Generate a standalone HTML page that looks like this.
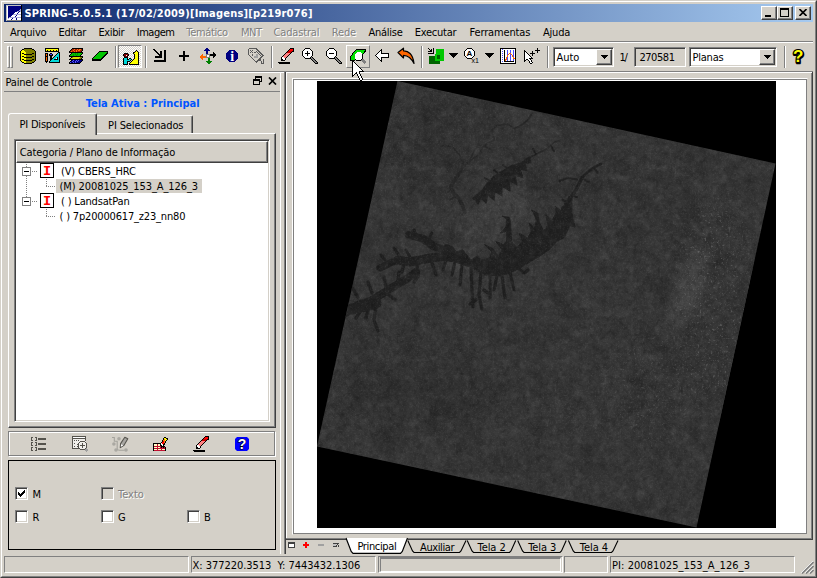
<!DOCTYPE html>
<html><head><meta charset="utf-8"><title>SPRING</title>
<style>
*{box-sizing:border-box;margin:0;padding:0}
html,body{width:817px;height:578px;overflow:hidden;background:#d4d0c8}
body{position:relative;font-family:"DejaVu Sans Condensed","Liberation Sans",sans-serif;font-size:11px;color:#000;line-height:13px}
.a{position:absolute}
.t{position:absolute;white-space:pre;line-height:13px}
.dis{color:#808080;text-shadow:1px 1px 0 #fff}
.hl{position:absolute;height:1px}
.vl{position:absolute;width:1px}
.g8{background:#808080}.g4{background:#404040}.w{background:#fff}.k{background:#000}
.sunk{position:absolute;border:1px solid;border-color:#808080 #fff #fff #808080}
.sunk2{position:absolute;border:1px solid;border-color:#808080 #fff #fff #808080;box-shadow:inset 1px 1px 0 #404040,inset -1px -1px 0 #d4d0c8}
.rais{position:absolute;border:1px solid;border-color:#fff #808080 #808080 #fff}
.btn{position:absolute;background:#d4d0c8;border:1px solid;border-color:#fff #404040 #404040 #fff;box-shadow:inset -1px -1px 0 #808080}
</style></head><body>
<!-- window frame -->
<div class="a" style="left:0;top:0;width:817px;height:578px;border:1px solid;border-color:#d4d0c8 #404040 #404040 #d4d0c8"></div>
<div class="a" style="left:1px;top:1px;width:815px;height:576px;border:1px solid;border-color:#fff #808080 #808080 #fff"></div>
<!-- title bar -->
<div class="a" id="title" style="left:4px;top:4px;width:809px;height:18px;background:linear-gradient(to right,#0a246a,#a6caf0)"></div>
<svg class="a" style="left:6px;top:5px" width="16" height="16" viewBox="0 0 16 16" shape-rendering="crispEdges"><path fill="#c0c0c0" d="M0 0h15v1h-15zM0 1h1v1h-1zM0 2h1v1h-1zM0 3h1v1h-1zM0 4h1v1h-1zM0 5h1v1h-1zM0 6h1v1h-1zM0 7h1v1h-1zM0 8h1v1h-1zM0 9h1v1h-1zM0 10h1v1h-1zM0 11h1v1h-1zM0 12h1v1h-1zM0 13h1v1h-1zM0 14h1v1h-1zM0 15h1v1h-1z"/><path fill="#000" d="M15 0h1v1h-1zM15 1h1v1h-1zM15 2h1v1h-1zM15 3h1v1h-1zM15 4h1v1h-1zM15 5h1v1h-1zM15 6h1v1h-1zM15 7h1v1h-1zM15 8h1v1h-1zM15 9h1v1h-1zM15 10h1v1h-1zM15 11h1v1h-1zM15 12h1v1h-1zM15 13h1v1h-1zM15 14h1v1h-1zM15 15h1v1h-1z"/><path fill="#fff" d="M1 1h1v1h-1zM1 2h1v1h-1zM1 3h1v1h-1zM1 4h1v1h-1zM1 5h1v1h-1zM1 6h1v1h-1zM1 7h1v1h-1zM9 7h3v1h-3zM13 7h2v1h-2zM1 8h1v1h-1zM8 8h3v1h-3zM12 8h3v1h-3zM1 9h1v1h-1zM1 10h1v1h-1zM6 10h4v1h-4zM11 10h4v1h-4zM1 11h1v1h-1zM5 11h4v1h-4zM10 11h5v1h-5zM1 12h1v1h-1zM1 13h1v1h-1zM3 13h3v1h-3zM7 13h3v1h-3zM11 13h4v1h-4zM1 14h4v1h-4zM6 14h4v1h-4zM11 14h4v1h-4z"/><path fill="#000080" d="M2 1h13v1h-13zM2 2h13v1h-13zM2 3h13v1h-13zM2 4h12v1h-12zM2 5h11v1h-11zM2 6h9v1h-9zM13 6h1v1h-1zM2 7h7v1h-7zM12 7h1v1h-1zM2 8h6v1h-6zM11 8h1v1h-1zM2 9h5v1h-5zM2 10h4v1h-4zM10 10h1v1h-1zM2 11h3v1h-3zM9 11h1v1h-1zM2 12h1v1h-1zM6 13h1v1h-1zM10 13h1v1h-1zM5 14h1v1h-1zM10 14h1v1h-1z"/><path fill="#a8a8dc" d="M14 4h1v1h-1zM13 5h2v1h-2zM11 6h2v1h-2zM14 6h1v1h-1zM7 9h8v1h-8zM3 12h12v1h-12zM2 13h1v1h-1z"/><path fill="#808080" d="M1 15h14v1h-14z"/></svg>
<div class="t" id="ttext" style="letter-spacing:0.207px;left:24.5px;top:7px;color:#fff;font-weight:bold">SPRING-5.0.5.1 (17/02/2009)[Imagens][p219r076]</div>
<div class="btn" style="left:761px;top:6px;width:16px;height:14px"><div class="a k" style="left:3px;top:8px;width:6px;height:2px"></div></div>
<div class="btn" style="left:777px;top:6px;width:16px;height:14px"><div class="a" style="left:2px;top:1px;width:9px;height:9px;border:1px solid #000;border-top-width:2px"></div></div>
<div class="btn" style="left:795px;top:6px;width:16px;height:14px"><svg class="a" style="left:3px;top:2px" width="8" height="7" viewBox="0 0 8 7"><path d="M0 0L7 7M7 0L0 7" stroke="#000" stroke-width="1.6" transform="translate(.5 0) scale(1 1)"/></svg></div>
<!-- menu bar -->
<div id="menu">
<div class="t" style="letter-spacing:-0.208px;left:10px;top:26px">Arquivo</div>
<div class="t" style="letter-spacing:-0.299px;left:58.5px;top:26px">Editar</div>
<div class="t" style="letter-spacing:-0.361px;left:98.4px;top:26px">Exibir</div>
<div class="t" style="letter-spacing:-0.507px;left:136.8px;top:26px">Imagem</div>
<div class="t dis" style="letter-spacing:-0.337px;left:186.3px;top:26px">Temático</div>
<div class="t dis" style="letter-spacing:-0.461px;left:241px;top:26px">MNT</div>
<div class="t dis" style="letter-spacing:-0.172px;left:273.6px;top:26px">Cadastral</div>
<div class="t dis" style="letter-spacing:-0.165px;left:331.8px;top:26px">Rede</div>
<div class="t" style="letter-spacing:-0.280px;left:368.6px;top:26px">Análise</div>
<div class="t" style="letter-spacing:-0.237px;left:414.7px;top:26px">Executar</div>
<div class="t" style="letter-spacing:-0.154px;left:469.6px;top:26px">Ferramentas</div>
<div class="t" style="letter-spacing:-0.248px;left:543.1px;top:26px">Ajuda</div>
</div>
<div class="hl g8" style="left:4px;top:41px;width:809px"></div>
<div class="hl w" style="left:4px;top:42px;width:809px"></div>
<!-- toolbar placeholder -->
<div id="toolbar">
<!-- handle -->
<div class="a" style="left:7px;top:46px;width:3px;height:22px;border:1px solid;border-color:#fff #808080 #808080 #fff"></div>
<div class="a" style="left:10px;top:46px;width:3px;height:22px;border:1px solid;border-color:#fff #808080 #808080 #fff"></div>
<!-- db -->
<svg class="a" style="left:20px;top:48px" width="16" height="16" viewBox="0 0 16 16" shape-rendering="crispEdges"><path fill="#000" d="M4 0h8v1h-8zM2 1h2v1h-2zM12 1h2v1h-2zM1 2h1v1h-1zM14 2h1v1h-1zM0 3h1v1h-1zM15 3h1v1h-1zM0 4h1v1h-1zM15 4h1v1h-1zM0 5h1v1h-1zM2 5h2v1h-2zM12 5h2v1h-2zM15 5h1v1h-1zM0 6h1v1h-1zM4 6h8v1h-8zM15 6h1v1h-1zM0 7h1v1h-1zM15 7h1v1h-1zM0 8h1v1h-1zM2 8h2v1h-2zM12 8h2v1h-2zM15 8h1v1h-1zM0 9h1v1h-1zM4 9h8v1h-8zM15 9h1v1h-1zM0 10h1v1h-1zM15 10h1v1h-1zM0 11h1v1h-1zM2 11h2v1h-2zM12 11h2v1h-2zM15 11h1v1h-1zM0 12h1v1h-1zM4 12h8v1h-8zM15 12h1v1h-1zM1 13h1v1h-1zM14 13h1v1h-1zM2 14h2v1h-2zM12 14h2v1h-2zM4 15h8v1h-8z"/><path fill="#808000" d="M4 1h8v1h-8zM4 2h10v1h-10zM5 3h10v1h-10zM6 4h9v1h-9zM6 5h6v1h-6zM14 5h1v1h-1zM12 6h3v1h-3zM6 7h9v1h-9zM6 8h6v1h-6zM14 8h1v1h-1zM12 9h3v1h-3zM6 10h9v1h-9zM6 11h6v1h-6zM14 11h1v1h-1zM12 12h3v1h-3zM6 13h8v1h-8zM6 14h6v1h-6z"/><path fill="#ffff00" d="M2 2h2v1h-2zM1 3h4v1h-4zM1 4h5v1h-5zM1 5h1v1h-1zM4 5h2v1h-2zM1 6h3v1h-3zM1 7h5v1h-5zM1 8h1v1h-1zM4 8h2v1h-2zM1 9h3v1h-3zM1 10h5v1h-5zM1 11h1v1h-1zM4 11h2v1h-2zM1 12h3v1h-3zM2 13h4v1h-4zM4 14h2v1h-2z"/></svg>
<!-- ruler/pencil/triangle -->
<svg class="a" style="left:44px;top:48px" width="16" height="15" viewBox="0 0 16 15" shape-rendering="crispEdges"><path fill="#000" d="M1 0h14v1h-14zM1 1h1v1h-1zM14 1h1v1h-1zM1 2h1v1h-1zM3 2h1v1h-1zM6 2h1v1h-1zM9 2h1v1h-1zM12 2h1v1h-1zM14 2h1v1h-1zM1 3h14v1h-14zM14 4h2v1h-2zM1 5h3v1h-3zM6 5h2v1h-2zM13 5h1v1h-1zM15 5h1v1h-1zM1 6h1v1h-1zM3 6h1v1h-1zM5 6h1v1h-1zM8 6h1v1h-1zM12 6h1v1h-1zM15 6h1v1h-1zM1 7h1v1h-1zM3 7h1v1h-1zM5 7h4v1h-4zM11 7h1v1h-1zM15 7h1v1h-1zM1 8h3v1h-3zM6 8h2v1h-2zM10 8h1v1h-1zM15 8h1v1h-1zM1 9h1v1h-1zM3 9h1v1h-1zM6 9h2v1h-2zM9 9h1v1h-1zM13 9h1v1h-1zM15 9h1v1h-1zM1 10h1v1h-1zM3 10h1v1h-1zM6 10h3v1h-3zM13 10h1v1h-1zM15 10h1v1h-1zM1 11h1v1h-1zM3 11h1v1h-1zM6 11h2v1h-2zM10 11h4v1h-4zM15 11h1v1h-1zM1 12h1v1h-1zM3 12h1v1h-1zM6 12h1v1h-1zM15 12h1v1h-1zM1 13h3v1h-3zM5 13h1v1h-1zM15 13h1v1h-1zM2 14h1v1h-1zM5 14h11v1h-11z"/><path fill="#ffff00" d="M2 1h12v1h-12zM2 2h1v1h-1zM4 2h2v1h-2zM7 2h2v1h-2zM10 2h2v1h-2zM13 2h1v1h-1z"/><path fill="#00d8d8" d="M14 5h1v1h-1zM13 6h2v1h-2zM12 7h3v1h-3zM11 8h4v1h-4zM10 9h3v1h-3zM14 9h1v1h-1zM9 10h3v1h-3zM14 10h1v1h-1zM8 11h2v1h-2zM14 11h1v1h-1zM7 12h8v1h-8zM6 13h9v1h-9z"/><path fill="#ff6600" d="M2 6h1v1h-1zM2 7h1v1h-1zM2 9h1v1h-1zM2 10h1v1h-1zM2 11h1v1h-1zM2 12h1v1h-1z"/><path fill="#4848ff" d="M6 6h2v1h-2z"/><path fill="#fff" d="M12 10h1v1h-1z"/></svg>
<!-- layers -->
<svg class="a" style="left:68px;top:48px" width="16" height="16" viewBox="0 0 16 16" shape-rendering="crispEdges"><path fill="#000" d="M4 0h11v1h-11zM3 1h1v1h-1zM14 1h1v1h-1zM2 2h1v1h-1zM14 2h1v1h-1zM1 3h1v1h-1zM13 3h1v1h-1zM1 4h14v1h-14zM3 5h1v1h-1zM14 5h1v1h-1zM2 6h1v1h-1zM13 6h1v1h-1zM1 7h1v1h-1zM12 7h1v1h-1zM1 8h14v1h-14zM3 9h1v1h-1zM14 9h1v1h-1zM2 10h1v1h-1zM13 10h1v1h-1zM1 11h14v1h-14zM3 12h1v1h-1zM14 12h1v1h-1zM2 13h1v1h-1zM13 13h1v1h-1zM1 14h1v1h-1zM12 14h1v1h-1zM1 15h11v1h-11z"/><path fill="#a02000" d="M4 1h2v1h-2zM7 1h2v1h-2zM10 1h1v1h-1zM13 1h1v1h-1zM3 2h2v1h-2zM6 2h2v1h-2zM9 2h1v1h-1zM12 2h2v1h-2zM2 3h1v1h-1zM4 3h2v1h-2zM7 3h1v1h-1zM9 3h4v1h-4z"/><path fill="#ff7010" d="M6 1h1v1h-1zM9 1h1v1h-1zM11 1h2v1h-2zM5 2h1v1h-1zM8 2h1v1h-1zM10 2h2v1h-2zM3 3h1v1h-1zM6 3h1v1h-1zM8 3h1v1h-1z"/><path fill="#00c400" d="M4 5h3v1h-3zM8 5h1v1h-1zM10 5h4v1h-4zM3 6h2v1h-2zM6 6h1v1h-1zM8 6h1v1h-1zM10 6h3v1h-3zM2 7h3v1h-3zM6 7h2v1h-2zM9 7h3v1h-3z"/><path fill="#009000" d="M7 5h1v1h-1zM9 5h1v1h-1zM5 6h1v1h-1zM7 6h1v1h-1zM9 6h1v1h-1zM5 7h1v1h-1zM8 7h1v1h-1z"/><path fill="#808000" d="M4 9h1v1h-1zM12 9h2v1h-2zM11 10h2v1h-2z"/><path fill="#d8d800" d="M5 9h7v1h-7zM3 10h8v1h-8z"/><path fill="#000080" d="M4 12h1v1h-1zM6 12h2v1h-2zM9 12h1v1h-1zM11 12h3v1h-3zM3 13h1v1h-1zM5 13h2v1h-2zM8 13h1v1h-1zM10 13h3v1h-3zM3 14h2v1h-2zM6 14h1v1h-1zM8 14h4v1h-4z"/><path fill="#5858ff" d="M5 12h1v1h-1zM8 12h1v1h-1zM10 12h1v1h-1zM4 13h1v1h-1zM7 13h1v1h-1zM9 13h1v1h-1zM2 14h1v1h-1zM5 14h1v1h-1zM7 14h1v1h-1z"/></svg>
<!-- green plane -->
<svg class="a" style="left:92px;top:48px" width="16" height="13" viewBox="0 0 16 13" shape-rendering="crispEdges"><path fill="#000" d="M7 3h9v1h-9zM6 4h1v1h-1zM15 4h1v1h-1zM5 5h1v1h-1zM14 5h2v1h-2zM4 6h1v1h-1zM13 6h2v1h-2zM3 7h1v1h-1zM12 7h2v1h-2zM2 8h1v1h-1zM11 8h2v1h-2zM1 9h1v1h-1zM10 9h2v1h-2zM0 10h1v1h-1zM9 10h2v1h-2zM0 11h10v1h-10zM0 12h9v1h-9z"/><path fill="#00c400" d="M7 4h8v1h-8zM6 5h8v1h-8zM5 6h8v1h-8zM4 7h8v1h-8zM3 8h8v1h-8zM2 9h8v1h-8zM1 10h8v1h-8z"/></svg>
<!-- sep1 -->
<div class="vl g8" style="left:115px;top:46px;height:22px"></div><div class="vl w" style="left:116px;top:46px;height:22px"></div>
<!-- pressed button -->
<div class="a" style="left:118px;top:45px;width:24px;height:23px;border:1px solid;border-color:#808080 #fff #fff #808080;background-color:#d4d0c8;background-image:linear-gradient(45deg,#fff 25%,transparent 25%,transparent 75%,#fff 75%),linear-gradient(45deg,#fff 25%,transparent 25%,transparent 75%,#fff 75%);background-size:2px 2px;background-position:0 0,1px 1px"></div>
<svg class="a" style="left:123px;top:49px" width="16" height="16" viewBox="0 0 16 16" shape-rendering="crispEdges"><path fill="#000" d="M13 1h1v1h-1zM12 2h1v1h-1zM14 2h1v1h-1zM10 3h2v1h-2zM15 3h1v1h-1zM1 4h4v1h-4zM10 4h1v1h-1zM15 4h1v1h-1zM0 5h1v1h-1zM5 5h1v1h-1zM11 5h1v1h-1zM15 5h1v1h-1zM0 6h1v1h-1zM5 6h1v1h-1zM11 6h1v1h-1zM15 6h1v1h-1zM1 7h1v1h-1zM4 7h1v1h-1zM11 7h1v1h-1zM15 7h1v1h-1zM1 8h4v1h-4zM11 8h1v1h-1zM15 8h1v1h-1zM0 9h1v1h-1zM4 9h1v1h-1zM6 9h2v1h-2zM11 9h1v1h-1zM15 9h1v1h-1zM0 10h1v1h-1zM4 10h2v1h-2zM8 10h1v1h-1zM10 10h1v1h-1zM15 10h1v1h-1zM0 11h1v1h-1zM7 11h1v1h-1zM9 11h1v1h-1zM15 11h1v1h-1zM0 12h1v1h-1zM4 12h3v1h-3zM8 12h1v1h-1zM15 12h1v1h-1zM0 13h1v1h-1zM4 13h1v1h-1zM7 13h1v1h-1zM15 13h1v1h-1zM0 14h1v1h-1zM4 14h1v1h-1zM6 14h1v1h-1zM15 14h1v1h-1zM0 15h5v1h-5zM6 15h10v1h-10z"/><path fill="#ffff00" d="M13 2h1v1h-1zM12 3h3v1h-3zM11 4h4v1h-4zM12 5h3v1h-3zM12 6h3v1h-3zM12 7h3v1h-3zM12 8h3v1h-3zM12 9h3v1h-3zM11 10h4v1h-4zM10 11h5v1h-5zM9 12h6v1h-6zM8 13h7v1h-7zM7 14h8v1h-8z"/><path fill="#800000" d="M1 5h4v1h-4zM1 6h2v1h-2zM4 6h1v1h-1zM2 7h2v1h-2z"/><path fill="#fff" d="M3 6h1v1h-1z"/><path fill="#00d8d8" d="M1 9h3v1h-3zM1 10h3v1h-3zM6 10h2v1h-2zM1 11h6v1h-6zM1 12h3v1h-3zM1 13h3v1h-3zM1 14h3v1h-3z"/></svg>
<!-- sep2 -->
<div class="vl g8" style="left:145px;top:46px;height:22px"></div><div class="vl w" style="left:146px;top:46px;height:22px"></div>
<!-- arrow corner -->
<svg class="a" style="left:152px;top:48px" width="16" height="14" viewBox="0 0 16 14" shape-rendering="crispEdges"><path fill="#000" d="M1 1h2v1h-2zM2 2h2v1h-2zM12 2h2v1h-2zM3 3h2v1h-2zM8 3h2v1h-2zM12 3h2v1h-2zM4 4h2v1h-2zM8 4h2v1h-2zM12 4h2v1h-2zM5 5h2v1h-2zM8 5h2v1h-2zM12 5h2v1h-2zM6 6h4v1h-4zM12 6h2v1h-2zM7 7h3v1h-3zM12 7h2v1h-2zM3 8h7v1h-7zM12 8h2v1h-2zM3 9h7v1h-7zM12 9h2v1h-2zM12 10h2v1h-2zM12 11h2v1h-2zM2 12h12v1h-12zM2 13h12v1h-12z"/></svg>
<!-- plus -->
<div class="a k" style="left:179px;top:55px;width:10px;height:2px"></div><div class="a k" style="left:183px;top:51px;width:2px;height:10px"></div>
<!-- move -->
<svg class="a" style="left:200px;top:48px" width="16" height="16" viewBox="0 0 16 16" shape-rendering="crispEdges"><path fill="#000080" d="M6 0h2v1h-2zM5 1h4v1h-4zM4 2h6v1h-6zM6 3h2v1h-2zM6 4h2v1h-2zM6 5h2v1h-2z"/><path fill="#000" d="M13 4h1v1h-1zM13 5h2v1h-2zM10 6h6v1h-6zM10 7h6v1h-6zM13 8h2v1h-2zM13 9h1v1h-1z"/><path fill="#ff6600" d="M2 6h1v1h-1zM1 7h2v1h-2zM0 8h6v1h-6zM0 9h6v1h-6zM1 10h2v1h-2zM2 11h1v1h-1z"/><path fill="#808080" d="M6 6h4v1h-4zM6 7h1v1h-1zM9 7h1v1h-1zM6 8h1v1h-1zM9 8h1v1h-1zM6 9h4v1h-4z"/><path fill="#fff" d="M7 7h2v1h-2zM7 8h2v1h-2z"/><path fill="#008000" d="M8 10h2v1h-2zM8 11h2v1h-2zM8 12h2v1h-2zM6 13h6v1h-6zM7 14h4v1h-4zM8 15h2v1h-2z"/></svg>
<!-- info -->
<svg class="a" style="left:226px;top:50px" width="12" height="12" viewBox="0 0 12 12" shape-rendering="crispEdges"><path fill="#000080" d="M3 0h6v1h-6zM2 1h8v1h-8zM1 2h10v1h-10zM0 3h12v1h-12zM0 4h12v1h-12zM0 5h12v1h-12zM0 6h12v1h-12zM0 7h12v1h-12zM0 8h12v1h-12zM1 9h10v1h-10zM2 10h8v1h-8zM3 11h6v1h-6z"/></svg><svg class="a" style="left:226px;top:50px" width="12" height="12" viewBox="0 0 12 12"><text x="6.300" y="10.900" text-anchor="middle" font-family="Liberation Serif,serif" font-weight="bold" font-size="14" fill="#fff">i</text></svg>
<!-- tag disabled -->
<svg class="a" style="left:248px;top:48px" width="16" height="16" viewBox="0 0 16 16" shape-rendering="crispEdges"><path fill="#5a5a5a" d="M1 0h8v1h-8zM0 1h1v1h-1zM8 1h2v1h-2zM0 2h1v1h-1zM2 2h1v1h-1zM4 2h1v1h-1zM9 2h2v1h-2zM0 3h1v1h-1zM3 3h1v1h-1zM8 3h1v1h-1zM10 3h2v1h-2zM0 4h1v1h-1zM2 4h1v1h-1zM4 4h1v1h-1zM6 4h2v1h-2zM9 4h1v1h-1zM11 4h2v1h-2zM0 5h1v1h-1zM10 5h1v1h-1zM12 5h2v1h-2zM0 6h1v1h-1zM4 6h1v1h-1zM11 6h1v1h-1zM13 6h2v1h-2zM1 7h1v1h-1zM4 7h1v1h-1zM12 7h1v1h-1zM14 7h2v1h-2zM2 8h1v1h-1zM13 8h2v1h-2zM3 9h1v1h-1zM12 9h2v1h-2zM4 10h1v1h-1zM11 10h2v1h-2zM5 11h1v1h-1zM10 11h3v1h-3zM15 11h1v1h-1zM6 12h1v1h-1zM9 12h4v1h-4zM15 12h1v1h-1zM7 13h3v1h-3zM13 13h1v1h-1zM15 13h1v1h-1zM8 14h1v1h-1zM13 14h1v1h-1zM15 14h1v1h-1zM13 15h3v1h-3z"/><path fill="#a0a0a0" d="M8 6h2v1h-2zM8 7h2v1h-2zM6 8h4v1h-4zM6 9h4v1h-4z"/></svg>
<!-- sep3 -->
<div class="vl g8" style="left:271px;top:46px;height:22px"></div><div class="vl w" style="left:272px;top:46px;height:22px"></div>
<!-- eraser -->
<svg class="a" style="left:278px;top:48px" width="16" height="16" viewBox="0 0 16 16" shape-rendering="crispEdges"><path fill="#000" d="M12 0h4v1h-4zM11 1h1v1h-1zM15 1h1v1h-1zM10 2h1v1h-1zM15 2h1v1h-1zM9 3h1v1h-1zM14 3h2v1h-2zM8 4h1v1h-1zM13 4h1v1h-1zM7 5h1v1h-1zM12 5h1v1h-1zM6 6h1v1h-1zM11 6h1v1h-1zM5 7h1v1h-1zM10 7h1v1h-1zM4 8h1v1h-1zM9 8h1v1h-1zM3 9h1v1h-1zM8 9h1v1h-1zM3 10h1v1h-1zM7 10h1v1h-1zM3 11h2v1h-2zM7 11h1v1h-1zM3 12h4v1h-4zM0 14h12v1h-12zM1 15h11v1h-11z"/><path fill="#ff0000" d="M12 1h3v1h-3zM11 2h4v1h-4z"/><path fill="#c80000" d="M10 3h4v1h-4zM9 4h4v1h-4z"/><path fill="#ff8080" d="M8 5h4v1h-4zM7 6h4v1h-4zM6 7h4v1h-4zM5 8h4v1h-4zM6 9h2v1h-2z"/><path fill="#fff" d="M4 9h2v1h-2zM4 10h3v1h-3zM5 11h2v1h-2z"/></svg>
<!-- zoom in -->
<svg class="a" style="left:302px;top:48px" width="17" height="16" viewBox="0 0 17 16" shape-rendering="crispEdges"><path fill="#000" d="M3 0h5v1h-5zM2 1h1v1h-1zM8 1h1v1h-1zM1 2h1v1h-1zM9 2h1v1h-1zM0 3h1v1h-1zM5 3h1v1h-1zM10 3h1v1h-1zM0 4h1v1h-1zM5 4h1v1h-1zM10 4h1v1h-1zM0 5h1v1h-1zM3 5h5v1h-5zM10 5h1v1h-1zM0 6h1v1h-1zM5 6h1v1h-1zM10 6h1v1h-1zM0 7h1v1h-1zM5 7h1v1h-1zM10 7h1v1h-1zM1 8h1v1h-1zM9 8h1v1h-1zM2 9h1v1h-1zM8 9h1v1h-1zM10 9h1v1h-1zM3 10h6v1h-6zM11 10h1v1h-1zM9 11h1v1h-1zM12 11h1v1h-1zM10 12h1v1h-1zM13 12h1v1h-1zM11 13h1v1h-1zM14 13h1v1h-1zM12 14h1v1h-1zM15 14h1v1h-1zM13 15h3v1h-3z"/><path fill="#fff" d="M3 1h5v1h-5zM2 2h7v1h-7zM1 3h4v1h-4zM6 3h4v1h-4zM1 4h4v1h-4zM6 4h4v1h-4zM1 5h2v1h-2zM8 5h2v1h-2zM1 6h4v1h-4zM6 6h4v1h-4zM1 7h4v1h-4zM6 7h4v1h-4zM2 8h7v1h-7zM3 9h5v1h-5z"/><path fill="#808080" d="M9 9h1v1h-1zM9 10h2v1h-2zM10 11h2v1h-2zM11 12h2v1h-2zM12 13h2v1h-2zM13 14h2v1h-2z"/></svg>
<!-- zoom out -->
<svg class="a" style="left:326px;top:48px" width="17" height="16" viewBox="0 0 17 16" shape-rendering="crispEdges"><path fill="#000" d="M3 0h5v1h-5zM2 1h1v1h-1zM8 1h1v1h-1zM1 2h1v1h-1zM9 2h1v1h-1zM0 3h1v1h-1zM10 3h1v1h-1zM0 4h1v1h-1zM10 4h1v1h-1zM0 5h1v1h-1zM3 5h5v1h-5zM10 5h1v1h-1zM0 6h1v1h-1zM10 6h1v1h-1zM0 7h1v1h-1zM10 7h1v1h-1zM1 8h1v1h-1zM9 8h1v1h-1zM2 9h1v1h-1zM8 9h1v1h-1zM10 9h1v1h-1zM3 10h6v1h-6zM11 10h1v1h-1zM9 11h1v1h-1zM12 11h1v1h-1zM10 12h1v1h-1zM13 12h1v1h-1zM11 13h1v1h-1zM14 13h1v1h-1zM12 14h1v1h-1zM15 14h1v1h-1zM13 15h3v1h-3z"/><path fill="#fff" d="M3 1h5v1h-5zM2 2h7v1h-7zM1 3h9v1h-9zM1 4h9v1h-9zM1 5h2v1h-2zM8 5h2v1h-2zM1 6h9v1h-9zM1 7h9v1h-9zM2 8h7v1h-7zM3 9h5v1h-5z"/><path fill="#808080" d="M9 9h1v1h-1zM9 10h2v1h-2zM10 11h2v1h-2zM11 12h2v1h-2zM12 13h2v1h-2zM13 14h2v1h-2z"/></svg>
<!-- hover raised button -->
<div class="a" style="left:346px;top:45px;width:24px;height:23px;border:1px solid;border-color:#fff #808080 #808080 #fff"></div>
<svg class="a" style="left:350px;top:48px" width="17" height="16" viewBox="0 0 17 16" shape-rendering="crispEdges"><path fill="#000" d="M6 1h10v1h-10zM5 2h1v1h-1zM15 2h1v1h-1zM4 3h1v1h-1zM14 3h2v1h-2zM3 4h1v1h-1zM14 4h1v1h-1zM2 5h1v1h-1zM13 5h1v1h-1zM2 6h1v1h-1zM12 6h1v1h-1zM1 7h1v1h-1zM12 7h1v1h-1zM0 8h1v1h-1zM12 8h1v1h-1zM0 9h1v1h-1zM12 9h1v1h-1zM0 10h1v1h-1zM12 10h1v1h-1zM0 11h1v1h-1zM5 11h1v1h-1zM11 11h1v1h-1zM0 12h5v1h-5zM6 12h5v1h-5z"/><path fill="#00e000" d="M6 2h9v1h-9zM5 3h9v1h-9zM4 4h3v1h-3zM11 4h3v1h-3zM3 5h3v1h-3zM12 5h1v1h-1zM3 6h2v1h-2zM2 7h3v1h-3zM1 8h4v1h-4zM1 9h4v1h-4zM1 10h4v1h-4zM1 11h4v1h-4z"/><path fill="#fff" d="M7 4h4v1h-4zM6 5h6v1h-6zM5 6h7v1h-7zM5 7h7v1h-7zM5 8h7v1h-7zM5 9h7v1h-7zM5 10h7v1h-7zM6 11h5v1h-5z"/><path fill="#808080" d="M12 11h2v1h-2zM11 12h4v1h-4zM12 13h4v1h-4zM13 14h3v1h-3zM14 15h1v1h-1z"/></svg>
<!-- left arrow -->
<svg class="a" style="left:375px;top:49px" width="15" height="13" viewBox="0 0 15 13" shape-rendering="crispEdges"><path fill="#000" d="M6 0h1v1h-1zM5 1h2v1h-2zM4 2h1v1h-1zM6 2h1v1h-1zM3 3h1v1h-1zM6 3h1v1h-1zM2 4h1v1h-1zM6 4h8v1h-8zM1 5h1v1h-1zM13 5h1v1h-1zM0 6h1v1h-1zM13 6h1v1h-1zM1 7h1v1h-1zM13 7h1v1h-1zM2 8h1v1h-1zM6 8h8v1h-8zM3 9h1v1h-1zM6 9h1v1h-1zM4 10h1v1h-1zM6 10h1v1h-1zM5 11h2v1h-2zM6 12h1v1h-1z"/><path fill="#fff" d="M5 2h1v1h-1zM4 3h2v1h-2zM3 4h3v1h-3zM2 5h11v1h-11zM1 6h12v1h-12zM2 7h11v1h-11zM3 8h3v1h-3zM4 9h2v1h-2zM5 10h1v1h-1z"/></svg>
<!-- undo -->
<svg class="a" style="left:397px;top:47px" width="18" height="18" viewBox="0 0 18 18">
<path d="M1 5.500L6.500 1.200V3.800C11 3.500 16 7 17 16.500C14.500 11.500 11.500 8.500 6.500 8.300V11Z" fill="#ff6600" stroke="#000" stroke-width="1.200" stroke-linejoin="round"/>
</svg>
<!-- sep4 -->
<div class="vl g8" style="left:421px;top:46px;height:22px"></div><div class="vl w" style="left:422px;top:46px;height:22px"></div>
<!-- green squares -->
<svg class="a" style="left:428px;top:48px" width="16" height="16" viewBox="0 0 16 16" shape-rendering="crispEdges"><path fill="#000" d="M0 0h1v1h-1zM5 0h1v1h-1zM1 1h1v1h-1zM3 1h1v1h-1zM5 1h1v1h-1zM2 2h2v1h-2zM5 2h1v1h-1zM0 3h4v1h-4zM5 3h1v1h-1zM5 4h1v1h-1zM0 5h6v1h-6z"/><path fill="#00c800" d="M8 1h8v1h-8zM8 2h8v1h-8zM8 3h8v1h-8zM8 4h8v1h-8zM8 5h8v1h-8zM7 6h9v1h-9zM7 7h2v1h-2zM12 7h4v1h-4zM7 8h2v1h-2zM12 8h4v1h-4zM7 9h2v1h-2zM12 9h4v1h-4zM7 10h2v1h-2zM12 10h4v1h-4zM7 11h9v1h-9zM7 12h9v1h-9z"/><path fill="#006400" d="M9 7h3v1h-3zM1 8h6v1h-6zM9 8h3v1h-3zM1 9h6v1h-6zM9 9h3v1h-3zM1 10h6v1h-6zM9 10h3v1h-3zM1 11h6v1h-6zM1 12h6v1h-6zM1 13h11v1h-11zM1 14h11v1h-11zM1 15h11v1h-11z"/></svg>
<svg class="a" style="left:449px;top:53px" width="9" height="5" viewBox="0 0 9 5" shape-rendering="crispEdges"><path d="M0 0H9V1H8V2H7V3H6V4H5V5H4V4H3V3H2V2H1V1H0Z" fill="#000"/></svg>
<!-- A x1 -->
<svg class="a" style="left:464px;top:48px" width="11" height="11" viewBox="0 0 11 11" shape-rendering="crispEdges"><path fill="#000" d="M3 0h5v1h-5zM2 1h1v1h-1zM8 1h1v1h-1zM1 2h1v1h-1zM9 2h1v1h-1zM0 3h1v1h-1zM10 3h1v1h-1zM0 4h1v1h-1zM10 4h1v1h-1zM0 5h1v1h-1zM10 5h1v1h-1zM0 6h1v1h-1zM10 6h1v1h-1zM0 7h1v1h-1zM10 7h1v1h-1zM1 8h1v1h-1zM9 8h1v1h-1zM2 9h1v1h-1zM8 9h1v1h-1zM3 10h5v1h-5z"/><path fill="#fff" d="M3 1h5v1h-5zM2 2h7v1h-7zM1 3h9v1h-9zM1 4h9v1h-9zM1 5h9v1h-9zM1 6h9v1h-9zM1 7h9v1h-9zM2 8h7v1h-7zM3 9h5v1h-5z"/></svg><svg class="a" style="left:464px;top:48px" width="18" height="18" viewBox="0 0 18 18"><text x="5.500" y="8.300" text-anchor="middle" font-family="Liberation Sans,sans-serif" font-weight="bold" font-size="8" fill="#000">A</text><text x="7.600" y="15" font-family="Liberation Sans,sans-serif" font-size="7" fill="#000">x1</text></svg>
<svg class="a" style="left:485px;top:53px" width="9" height="5" viewBox="0 0 9 5" shape-rendering="crispEdges"><path d="M0 0H9V1H8V2H7V3H6V4H5V5H4V4H3V3H2V2H1V1H0Z" fill="#000"/></svg>
<!-- histogram -->
<svg class="a" style="left:500px;top:48px" width="16" height="16" viewBox="0 0 16 16" shape-rendering="crispEdges"><path fill="#000" d="M0 0h16v1h-16zM0 1h1v1h-1zM15 1h1v1h-1zM0 2h1v1h-1zM4 2h1v1h-1zM15 2h1v1h-1zM0 3h1v1h-1zM4 3h1v1h-1zM15 3h1v1h-1zM0 4h1v1h-1zM4 4h1v1h-1zM15 4h1v1h-1zM0 5h1v1h-1zM4 5h1v1h-1zM15 5h1v1h-1zM0 6h1v1h-1zM4 6h1v1h-1zM15 6h1v1h-1zM0 7h1v1h-1zM4 7h1v1h-1zM15 7h1v1h-1zM0 8h1v1h-1zM4 8h1v1h-1zM15 8h1v1h-1zM0 9h1v1h-1zM4 9h1v1h-1zM15 9h1v1h-1zM0 10h1v1h-1zM4 10h1v1h-1zM15 10h1v1h-1zM0 11h1v1h-1zM4 11h1v1h-1zM15 11h1v1h-1zM0 12h1v1h-1zM4 12h1v1h-1zM15 12h1v1h-1zM0 13h1v1h-1zM4 13h10v1h-10zM15 13h1v1h-1zM0 14h1v1h-1zM15 14h1v1h-1zM0 15h16v1h-16z"/><path fill="#fff" d="M1 1h1v1h-1zM3 1h12v1h-12zM1 2h3v1h-3zM5 2h2v1h-2zM8 2h2v1h-2zM11 2h2v1h-2zM14 2h1v1h-1zM1 3h1v1h-1zM3 3h1v1h-1zM5 3h2v1h-2zM8 3h2v1h-2zM11 3h2v1h-2zM14 3h1v1h-1zM1 4h3v1h-3zM5 4h2v1h-2zM8 4h2v1h-2zM11 4h2v1h-2zM14 4h1v1h-1zM1 5h1v1h-1zM3 5h1v1h-1zM5 5h2v1h-2zM8 5h1v1h-1zM11 5h2v1h-2zM14 5h1v1h-1zM1 6h3v1h-3zM5 6h2v1h-2zM9 6h1v1h-1zM12 6h1v1h-1zM14 6h1v1h-1zM1 7h1v1h-1zM3 7h1v1h-1zM5 7h2v1h-2zM8 7h2v1h-2zM11 7h1v1h-1zM14 7h1v1h-1zM1 8h3v1h-3zM5 8h2v1h-2zM8 8h2v1h-2zM11 8h1v1h-1zM14 8h1v1h-1zM1 9h1v1h-1zM3 9h1v1h-1zM5 9h1v1h-1zM8 9h2v1h-2zM11 9h2v1h-2zM14 9h1v1h-1zM1 10h3v1h-3zM5 10h1v1h-1zM8 10h2v1h-2zM11 10h2v1h-2zM1 11h1v1h-1zM3 11h1v1h-1zM8 11h2v1h-2zM11 11h2v1h-2zM14 11h1v1h-1zM1 12h3v1h-3zM6 12h1v1h-1zM8 12h2v1h-2zM11 12h2v1h-2zM14 12h1v1h-1zM1 13h1v1h-1zM3 13h1v1h-1zM14 13h1v1h-1zM1 14h14v1h-14z"/><path fill="#4848ff" d="M2 1h1v1h-1zM7 2h1v1h-1zM10 2h1v1h-1zM13 2h1v1h-1zM2 3h1v1h-1zM7 3h1v1h-1zM10 3h1v1h-1zM13 3h1v1h-1zM7 4h1v1h-1zM10 4h1v1h-1zM13 4h1v1h-1zM2 5h1v1h-1zM7 5h1v1h-1zM13 5h1v1h-1zM7 6h1v1h-1zM10 6h1v1h-1zM13 6h1v1h-1zM2 7h1v1h-1zM10 7h1v1h-1zM13 7h1v1h-1zM10 8h1v1h-1zM13 8h1v1h-1zM2 9h1v1h-1zM7 9h1v1h-1zM10 9h1v1h-1zM7 10h1v1h-1zM10 10h1v1h-1zM2 11h1v1h-1zM7 11h1v1h-1zM10 11h1v1h-1zM13 11h1v1h-1zM7 12h1v1h-1zM10 12h1v1h-1zM13 12h1v1h-1zM2 13h1v1h-1z"/><path fill="#ff6600" d="M9 5h2v1h-2zM8 6h1v1h-1zM11 6h1v1h-1zM7 7h1v1h-1zM12 7h1v1h-1zM7 8h1v1h-1zM12 8h1v1h-1zM6 9h1v1h-1zM13 9h1v1h-1zM6 10h1v1h-1zM13 10h2v1h-2zM5 11h2v1h-2zM5 12h1v1h-1z"/></svg>
<!-- pointer ++ -->
<svg class="a" style="left:524px;top:48px" width="16" height="16" viewBox="0 0 16 16" shape-rendering="crispEdges"><path fill="#000" d="M13 0h1v1h-1zM13 1h1v1h-1zM0 2h1v1h-1zM11 2h5v1h-5zM0 3h2v1h-2zM8 3h1v1h-1zM13 3h1v1h-1zM0 4h1v1h-1zM2 4h1v1h-1zM8 4h1v1h-1zM13 4h1v1h-1zM0 5h1v1h-1zM3 5h1v1h-1zM6 5h5v1h-5zM0 6h1v1h-1zM4 6h1v1h-1zM8 6h1v1h-1zM0 7h1v1h-1zM5 7h1v1h-1zM8 7h1v1h-1zM0 8h1v1h-1zM6 8h1v1h-1zM0 9h1v1h-1zM7 9h1v1h-1zM0 10h1v1h-1zM5 10h4v1h-4zM0 11h1v1h-1zM2 11h2v1h-2zM6 11h1v1h-1zM0 12h2v1h-2zM4 12h1v1h-1zM7 12h1v1h-1zM0 13h1v1h-1zM5 13h1v1h-1zM7 13h1v1h-1zM5 14h1v1h-1zM8 14h1v1h-1zM6 15h2v1h-2z"/><path fill="#fff" d="M1 4h1v1h-1zM1 5h2v1h-2zM1 6h3v1h-3zM1 7h4v1h-4zM1 8h5v1h-5zM1 9h6v1h-6zM1 10h4v1h-4zM1 11h1v1h-1zM4 11h2v1h-2zM5 12h2v1h-2zM6 13h1v1h-1zM6 14h2v1h-2z"/></svg>
<!-- sep5 -->
<div class="vl g8" style="left:547px;top:46px;height:22px"></div><div class="vl w" style="left:548px;top:46px;height:22px"></div>
<!-- combo Auto -->
<div class="sunk2" style="left:553px;top:47px;width:61px;height:20px;background:#fff"></div>
<div class="t" style="letter-spacing:-0.046px;left:556.6px;top:51px">Auto</div>
<div class="btn" style="left:596px;top:49px;width:16px;height:16px"></div>
<svg class="a" style="left:601px;top:55px" width="7" height="4" viewBox="0 0 7 4" shape-rendering="crispEdges"><path d="M0 0H7V1H6V2H5V3H4V4H3V3H2V2H1V1H0Z" fill="#000"/></svg>
<div class="t" style="letter-spacing:-1.220px;left:619.4px;top:51px">1/</div>
<div class="sunk2" style="left:634px;top:47px;width:52px;height:20px"></div>
<div class="t" style="letter-spacing:-0.430px;left:639.4px;top:51px">270581</div>
<div class="sunk2" style="left:689px;top:47px;width:88px;height:20px;background:#fff"></div>
<div class="t" style="letter-spacing:-0.230px;left:692.5px;top:51px">Planas</div>
<div class="btn" style="left:759px;top:49px;width:16px;height:16px"></div>
<svg class="a" style="left:764px;top:55px" width="7" height="4" viewBox="0 0 7 4" shape-rendering="crispEdges"><path d="M0 0H7V1H6V2H5V3H4V4H3V3H2V2H1V1H0Z" fill="#000"/></svg>
<!-- sep6 -->
<div class="vl g8" style="left:784px;top:46px;height:22px"></div><div class="vl w" style="left:785px;top:46px;height:22px"></div>
<!-- help -->
<svg class="a" id="help" style="left:788px;top:46px" width="20" height="20" viewBox="0 0 20 20"><text x="10.2" y="16" text-anchor="middle" font-family="Liberation Sans,sans-serif" font-weight="bold" font-size="17" fill="#000" stroke="#000" stroke-width="2.6" stroke-linejoin="round" transform="translate(.6 .6)">?</text><text x="10.2" y="16" text-anchor="middle" font-family="Liberation Sans,sans-serif" font-weight="bold" font-size="17" fill="#ffff00" stroke="#000" stroke-width="2.200" stroke-linejoin="round" paint-order="stroke fill">?</text></svg>
</div>
<div class="hl g8" style="left:4px;top:71px;width:809px"></div>
<div class="hl w" style="left:4px;top:72px;width:809px"></div>
<!-- dock -->
<div id="dock">
<div class="t" style="letter-spacing:-0.184px;left:5.5px;top:76px">Painel de Controle</div>
<!-- float btn -->
<svg class="a" style="left:253px;top:76px" width="9" height="10" viewBox="0 0 9 10" shape-rendering="crispEdges">
<path d="M2.500 3V.5H8.500V5.500H6" fill="none" stroke="#000"/><rect x="2" y="0" width="7" height="2" fill="#000"/>
<rect x=".5" y="3.500" width="6" height="5" fill="none" stroke="#000"/><rect x="0" y="3" width="7" height="2" fill="#000"/>
</svg>
<svg class="a" style="left:268px;top:77px" width="9" height="8" viewBox="0 0 9 8"><path d="M1 .5L8 7.500M8 .5L1 7.500" stroke="#000" stroke-width="1.700"/></svg>
<div class="hl g8" style="left:4px;top:91px;width:276px"></div>
<div class="vl w" style="left:280px;top:73px;height:481px"></div>
<div class="vl g8" style="left:284px;top:72px;height:482px"></div>
<div class="vl g4" style="left:285px;top:72px;height:482px"></div>
<div class="t" style="letter-spacing:-0.016px;left:85.7px;top:97px;font-weight:bold;color:#0055ff">Tela Ativa : Principal</div>
<!-- tab pane -->
<div class="a" style="left:8px;top:133px;width:268px;height:295px;border:1px solid;border-color:#fff #404040 #404040 #fff;box-shadow:inset -1px -1px 0 #808080"></div>
<!-- tab 2 -->
<div class="a" style="left:96px;top:115px;width:97px;height:18px;border:1px solid;border-color:#fff #404040 transparent #fff;border-bottom:0;border-radius:2px 2px 0 0;box-shadow:inset -1px 0 0 #808080"></div>
<div class="t" style="letter-spacing:-0.135px;left:108.1px;top:119px">PI Selecionados</div>
<!-- tab 1 selected -->
<div class="a" style="left:8px;top:113px;width:89px;height:22px;background:#d4d0c8;border:1px solid;border-color:#fff #404040 transparent #fff;border-bottom:0;border-radius:3px 2px 0 0;box-shadow:inset -1px 0 0 #808080"></div>
<div class="t" style="letter-spacing:-0.220px;left:19.6px;top:118px">PI Disponíveis</div>
<!-- tree -->
<div class="sunk2" style="left:14px;top:139px;width:256px;height:283px;background:#fff"></div>
<div class="a" style="left:16px;top:141px;width:252px;height:22px;background:#d4d0c8;border:1px solid;border-color:#fff #404040 #404040 #fff;box-shadow:inset -1px -1px 0 #808080"></div>
<div class="t" style="letter-spacing:-0.130px;left:19.8px;top:146px">Categoria / Plano de Informação</div>
<!-- tree branches -->
<svg class="a" style="left:16px;top:163px" width="50" height="62" viewBox="0 0 50 62" shape-rendering="crispEdges">
<g stroke="#808080" stroke-dasharray="1 1" fill="none">
<path d="M10.500 1V4M10.500 13V34M16 8.500H21M16 38.500H21M30.500 16V24M30 23.500H39M30.500 46V54M30 53.500H39"/></g>
<rect x="6.500" y="4.500" width="8" height="8" fill="#fff" stroke="#808080"/><rect x="8" y="8" width="5" height="1" fill="#000"/>
<rect x="6.500" y="34.500" width="8" height="8" fill="#fff" stroke="#808080"/><rect x="8" y="38" width="5" height="1" fill="#000"/>
<rect x="24.500" y=".5" width="13" height="14" fill="#fff" stroke="#000"/>
<text x="31" y="12" text-anchor="middle" font-family="Liberation Mono,monospace" font-weight="bold" font-size="13.500" fill="#ff0000" shape-rendering="auto">I</text>
<rect x="24.500" y="30.500" width="13" height="14" fill="#fff" stroke="#000"/>
<text x="31" y="42" text-anchor="middle" font-family="Liberation Mono,monospace" font-weight="bold" font-size="13.500" fill="#ff0000" shape-rendering="auto">I</text>
</svg>
<div class="t" style="letter-spacing:-0.130px;left:61px;top:165px">(V) CBERS_HRC</div>
<div class="a" style="left:56px;top:179px;width:146px;height:14px;background:#d4d0c8"></div>
<div class="t" style="letter-spacing:-0.075px;left:59.5px;top:180px">(M) 20081025_153_A_126_3</div>
<div class="t" style="letter-spacing:-0.176px;left:61px;top:195px">( ) LandsatPan</div>
<div class="t" style="letter-spacing:-0.172px;left:59.5px;top:210px">( ) 7p20000617_z23_nn80</div>
<!-- button bar -->
<div class="a" style="left:9px;top:432px;width:267px;height:25px;border:1px solid #fff"></div>
<div class="a" style="left:8px;top:431px;width:267px;height:25px;border:1px solid #808080"></div>
<!-- icon1 list -->
<svg class="a" style="left:31px;top:437px" width="15" height="14" viewBox="0 0 15 14" shape-rendering="crispEdges"><path fill="#55534d" d="M0 0h2v1h-2zM4 0h2v1h-2zM0 1h1v1h-1zM5 1h1v1h-1zM7 1h8v1h-8zM0 2h1v1h-1zM5 2h1v1h-1zM7 2h8v1h-8zM0 3h2v1h-2zM4 3h2v1h-2zM0 5h2v1h-2zM4 5h2v1h-2zM0 6h1v1h-1zM5 6h1v1h-1zM7 6h8v1h-8zM0 7h1v1h-1zM5 7h1v1h-1zM7 7h8v1h-8zM0 8h2v1h-2zM4 8h2v1h-2zM0 10h2v1h-2zM4 10h2v1h-2zM0 11h1v1h-1zM5 11h1v1h-1zM7 11h8v1h-8zM0 12h1v1h-1zM5 12h1v1h-1zM7 12h8v1h-8zM0 13h2v1h-2zM4 13h2v1h-2z"/></svg>
<!-- icon2 table zoom -->
<svg class="a" style="left:72px;top:436px" width="16" height="16" viewBox="0 0 16 16" shape-rendering="crispEdges"><path fill="#55534d" d="M0 0h14v1h-14zM0 1h1v1h-1zM13 1h1v1h-1zM0 2h14v1h-14zM0 3h1v1h-1zM13 3h1v1h-1zM0 4h1v1h-1zM2 4h1v1h-1zM4 4h1v1h-1zM6 4h1v1h-1zM13 4h1v1h-1zM0 5h1v1h-1zM8 5h5v1h-5zM0 6h1v1h-1zM7 6h1v1h-1zM13 6h1v1h-1zM0 7h1v1h-1zM2 7h1v1h-1zM6 7h1v1h-1zM10 7h1v1h-1zM14 7h1v1h-1zM0 8h1v1h-1zM5 8h2v1h-2zM10 8h1v1h-1zM14 8h1v1h-1zM0 9h1v1h-1zM6 9h1v1h-1zM8 9h5v1h-5zM14 9h1v1h-1zM0 10h1v1h-1zM2 10h1v1h-1zM5 10h2v1h-2zM10 10h1v1h-1zM14 10h1v1h-1zM0 11h1v1h-1zM6 11h1v1h-1zM10 11h1v1h-1zM14 11h1v1h-1zM0 12h8v1h-8zM13 12h1v1h-1zM8 13h5v1h-5z"/><path fill="#fff" d="M1 1h12v1h-12z"/><path fill="#f0eeea" d="M1 3h12v1h-12zM1 4h1v1h-1zM3 4h1v1h-1zM5 4h1v1h-1zM7 4h6v1h-6zM1 5h7v1h-7zM13 5h1v1h-1zM1 6h6v1h-6zM8 6h5v1h-5zM1 7h1v1h-1zM3 7h3v1h-3zM7 7h3v1h-3zM11 7h3v1h-3zM1 8h4v1h-4zM7 8h3v1h-3zM11 8h3v1h-3zM1 9h5v1h-5zM7 9h1v1h-1zM13 9h1v1h-1zM1 10h1v1h-1zM3 10h2v1h-2zM7 10h3v1h-3zM11 10h3v1h-3zM1 11h5v1h-5zM7 11h3v1h-3zM11 11h3v1h-3zM8 12h5v1h-5z"/><path fill="#a0a0a0" d="M14 12h1v1h-1zM13 13h3v1h-3zM13 14h3v1h-3zM14 15h1v1h-1z"/></svg>
<!-- icon3 vector edit disabled -->
<svg class="a" style="left:112px;top:436px" width="17" height="16" viewBox="0 0 17 16">
<path d="M0 1.500H2.300V5.300H5.200V13Q5.300 14.300 7.400 14.300H12.600" fill="none" stroke="#a4a29c" stroke-width="1.100"/>
<circle cx="7" cy="2.800" r="1.800" fill="#aaa8a2"/><circle cx="1.900" cy="8" r="1.800" fill="#aaa8a2"/><circle cx="4" cy="14" r="1.800" fill="#aaa8a2"/><circle cx="14" cy="14" r="1.800" fill="#aaa8a2"/>
<path d="M8.300 11.600L8.600 7.600L12.800 1.200L15.800 2.800L12 9.300Z" fill="#a8a6a2" stroke="#585650" stroke-width="1.100" stroke-linejoin="round"/>
<path d="M8.700 10.800L9.200 8.300L11.300 9.400Z" fill="#fff"/>
</svg>
<!-- icon4 table pencil -->
<svg class="a" style="left:153px;top:437px" width="16" height="14" viewBox="0 0 16 14" shape-rendering="crispEdges"><path fill="#000" d="M11 0h2v1h-2zM10 1h1v1h-1zM13 1h2v1h-2zM10 2h1v1h-1zM14 2h1v1h-1zM9 3h1v1h-1zM13 3h1v1h-1zM9 4h1v1h-1zM12 4h1v1h-1zM8 5h1v1h-1zM12 5h1v1h-1zM0 6h8v1h-8zM11 6h1v1h-1zM0 7h1v1h-1zM7 7h1v1h-1zM10 7h2v1h-2zM0 8h1v1h-1zM7 8h2v1h-2zM10 8h1v1h-1zM0 9h1v1h-1zM8 9h4v1h-4zM0 10h1v1h-1zM8 10h1v1h-1zM10 10h1v1h-1zM12 10h1v1h-1zM0 11h1v1h-1zM12 11h1v1h-1zM0 12h1v1h-1zM12 12h1v1h-1zM0 13h1v1h-1zM12 13h1v1h-1z"/><path fill="#ffff00" d="M11 1h2v1h-2zM12 2h2v1h-2zM12 3h1v1h-1z"/><path fill="#ff7010" d="M11 2h1v1h-1zM10 3h2v1h-2zM11 4h1v1h-1zM11 5h1v1h-1z"/><path fill="#ff0000" d="M10 4h1v1h-1zM9 5h2v1h-2zM9 6h2v1h-2z"/><path fill="#fff" d="M8 6h1v1h-1zM8 7h2v1h-2zM9 8h1v1h-1z"/><path fill="#ffffc8" d="M1 7h3v1h-3zM5 7h2v1h-2zM1 8h3v1h-3zM5 8h2v1h-2zM1 10h3v1h-3zM5 10h2v1h-2zM1 12h3v1h-3zM5 12h3v1h-3zM9 12h3v1h-3z"/><path fill="#c01030" d="M4 7h1v1h-1zM4 8h1v1h-1zM1 9h7v1h-7zM4 10h1v1h-1zM7 10h1v1h-1zM9 10h1v1h-1zM11 10h1v1h-1zM1 11h11v1h-11zM4 12h1v1h-1zM8 12h1v1h-1zM1 13h11v1h-11z"/></svg>
<!-- icon5 eraser -->
<svg class="a" style="left:193px;top:436px" width="16" height="16" viewBox="0 0 16 16" shape-rendering="crispEdges"><path fill="#000" d="M12 0h4v1h-4zM11 1h1v1h-1zM15 1h1v1h-1zM10 2h1v1h-1zM15 2h1v1h-1zM9 3h1v1h-1zM14 3h2v1h-2zM8 4h1v1h-1zM13 4h1v1h-1zM7 5h1v1h-1zM12 5h1v1h-1zM6 6h1v1h-1zM11 6h1v1h-1zM5 7h1v1h-1zM10 7h1v1h-1zM4 8h1v1h-1zM9 8h1v1h-1zM3 9h1v1h-1zM8 9h1v1h-1zM3 10h1v1h-1zM7 10h1v1h-1zM3 11h2v1h-2zM7 11h1v1h-1zM3 12h4v1h-4zM0 14h12v1h-12zM1 15h11v1h-11z"/><path fill="#ff0000" d="M12 1h3v1h-3zM11 2h4v1h-4z"/><path fill="#c80000" d="M10 3h4v1h-4zM9 4h4v1h-4z"/><path fill="#ff8080" d="M8 5h4v1h-4zM7 6h4v1h-4zM6 7h4v1h-4zM5 8h4v1h-4zM6 9h2v1h-2z"/><path fill="#fff" d="M4 9h2v1h-2zM4 10h3v1h-3zM5 11h2v1h-2z"/></svg>
<!-- icon6 help -->
<svg class="a" style="left:235px;top:437px" width="14" height="14" viewBox="0 0 14 14">
<path d="M2 0H12L14 2V12L12 14H2L0 12V2Z" fill="#0000ff"/>
<text x="7" y="12" text-anchor="middle" font-family="Liberation Sans,sans-serif" font-weight="bold" font-size="14" fill="#fff" stroke="#000" stroke-width="1" paint-order="stroke fill">?</text>
</svg>
<!-- checkbox group -->
<div class="a" style="left:8px;top:460px;width:268px;height:90px;border:1px solid #000"></div>
<div class="sunk2" style="left:15px;top:487px;width:13px;height:13px;background:#fff"></div>
<svg class="a" style="left:18px;top:490px" width="7" height="7" viewBox="0 0 7 7" shape-rendering="crispEdges"><path d="M0 2H1V3H2V4H3V3H4V2H5V1H6V0H7V3H6V4H5V5H4V6H3V7H2V6H1V5H0Z" fill="#000"/></svg>
<div class="t" style="left:32.5px;top:488px">M</div>
<div class="sunk2" style="left:101px;top:487px;width:13px;height:13px"></div>
<div class="t dis" style="left:118px;top:488px">Texto</div>
<div class="sunk2" style="left:15px;top:510px;width:13px;height:13px;background:#fff"></div>
<div class="t" style="left:32.5px;top:511px">R</div>
<div class="sunk2" style="left:101px;top:510px;width:13px;height:13px;background:#fff"></div>
<div class="t" style="left:118px;top:511px">G</div>
<div class="sunk2" style="left:187px;top:510px;width:13px;height:13px;background:#fff"></div>
<div class="t" style="left:204px;top:511px">B</div>
</div>
<!-- canvas -->
<div id="canvas">
<div class="vl w" style="left:286px;top:72px;height:467px"></div>
<div class="hl g8" style="left:286px;top:538px;width:527px"></div>
<div class="hl g4" style="left:286px;top:539px;width:527px"></div>
<div class="vl g8" style="left:811px;top:73px;height:466px"></div>
<div class="vl g4" style="left:812px;top:72px;height:468px"></div>
<div class="a" style="left:292px;top:78px;width:516px;height:457px;border:1px solid;border-color:#fff transparent transparent #fff"></div>
<div class="a" style="left:293px;top:79px;width:514px;height:455px;border:1px solid #808080;background:#fff"></div>
<svg class="a" style="left:317px;top:81px" width="459" height="447" viewBox="317 81 459 447">
<defs>
<filter id="nz" x="0" y="0" width="100%" height="100%"><feTurbulence type="fractalNoise" baseFrequency="0.6" numOctaves="2" seed="7" result="n"/><feColorMatrix in="n" type="matrix" values="0 0 0 0 1  0 0 0 0 1  0 0 0 0 1  1.2 1.2 0 0 -1.15"/></filter>
<filter id="nzd" x="0" y="0" width="100%" height="100%"><feTurbulence type="fractalNoise" baseFrequency="0.3" numOctaves="2" seed="19" result="n"/><feColorMatrix in="n" type="matrix" values="0 0 0 0 0  0 0 0 0 0  0 0 0 0 0  1.4 1.4 0 0 -1.25"/></filter>
<filter id="nz2" x="0" y="0" width="100%" height="100%"><feTurbulence type="fractalNoise" baseFrequency="0.04" numOctaves="3" seed="3" result="n"/><feColorMatrix in="n" type="matrix" values="0 0 0 0 0  0 0 0 0 0  0 0 0 0 0  1.6 0 0 0 -.62"/></filter>
<filter id="nz4" x="0" y="0" width="100%" height="100%"><feTurbulence type="fractalNoise" baseFrequency="0.13" numOctaves="2" seed="31" result="n"/><feColorMatrix in="n" type="matrix" values="0 0 0 0 0  0 0 0 0 0  0 0 0 0 0  2.2 0 0 0 -1"/></filter>
<filter id="nz5" x="0" y="0" width="100%" height="100%"><feTurbulence type="fractalNoise" baseFrequency="0.11" numOctaves="2" seed="47" result="n"/><feColorMatrix in="n" type="matrix" values="0 0 0 0 1  0 0 0 0 1  0 0 0 0 1  0 2.2 0 0 -1.05"/></filter>
<filter id="sp" x="0" y="0" width="100%" height="100%"><feTurbulence type="fractalNoise" baseFrequency="0.45" numOctaves="3" seed="23" result="n"/><feColorMatrix in="n" type="matrix" values="0 0 0 0 1  0 0 0 0 1  0 0 0 0 1  3 3 0 0 -3.45"/></filter>
<filter id="bl"><feGaussianBlur stdDeviation=".4"/></filter>
<filter id="bl2"><feGaussianBlur stdDeviation="6"/></filter>
<filter id="bl3"><feGaussianBlur stdDeviation="14"/></filter>
<clipPath id="quad"><polygon points="397.500,81 775.500,163.500 696.500,527.500 317,446.500"/></clipPath>
<mask id="urb"><rect x="317" y="81" width="459" height="447" fill="#000"/><g filter="url(#bl3)"><ellipse cx="715" cy="300" rx="40" ry="110" fill="#fff"/><ellipse cx="650" cy="390" rx="45" ry="60" fill="#aaa"/><ellipse cx="560" cy="420" rx="40" ry="30" fill="#666"/></g></mask>
</defs>
<rect x="317" y="81" width="459" height="447" fill="#000"/>
<g clip-path="url(#quad)">
<rect x="317" y="81" width="459" height="447" fill="#393939"/>
<g filter="url(#bl2)">
<ellipse cx="500" cy="215" rx="42" ry="20" fill="#424242" transform="rotate(-35 500 215)"/>
<ellipse cx="458" cy="258" rx="16" ry="9" fill="#4a4a4a"/>
<ellipse cx="700" cy="320" rx="60" ry="110" fill="#373737"/><ellipse cx="690" cy="288" rx="14" ry="45" fill="#454545" transform="rotate(18 690 288)"/>
<ellipse cx="430" cy="140" rx="40" ry="40" fill="#343434"/>
<ellipse cx="420" cy="390" rx="80" ry="40" fill="#343434"/>
<ellipse cx="640" cy="200" rx="60" ry="40" fill="#383838"/>
</g>
<rect x="317" y="81" width="459" height="447" filter="url(#nz2)" opacity=".22"/>
<g id="water" filter="url(#bl)" fill="none" stroke="#232323" stroke-linecap="round" stroke-linejoin="round">
<path d="M601 164L594 167.300L587.300 172.500L582 177.700" stroke-width="2.600"/>
<path d="M582 177.700L578.600 184.600L575.200 191.500L570 198.400L566.500 205.400" stroke-width="3.600"/>
<path d="M570 198.400L569.500 202" stroke-width="4.800"/>
<polygon points="572.0,200.0 571.7,212.4 572.8,218.7 575.3,227.0 569.7,225.9 566.6,233.2 564.5,237.3 556.0,242.0 550.0,249.0 540.0,256.0 530.0,262.0 520.0,268.0 510.0,273.0 500.0,276.0 486.0,275.0 470.0,267.0 455.0,262.0 440.0,260.0 440.0,247.7 446.2,244.6 452.4,246.7 456.6,251.9 462.8,249.8 471.1,260.2 477.3,256.0 481.5,260.2 489.8,258.1 491.9,251.9 484.6,244.6 492.9,248.8 498.1,256.0 502.2,249.8 496.0,241.5 503.3,244.6 506.4,241.5 506.8,231.1 500.2,233.2 506.0,227.0 506.4,218.7 502.2,216.2 509.5,217.6 510.5,222.8 511.6,241.5 516.8,247.7 523.0,241.5 518.8,233.2 525.1,236.3 527.1,239.4 531.3,231.1 529.2,222.8 534.4,228.0 536.5,220.7 533.4,212.4 531.3,210.0 537.5,212.9 539.6,222.8 543.7,231.1 547.9,224.9 545.8,214.5 551.0,219.7 552.0,220.7 556.2,212.4 555.1,206.2 559.9,210.0 560.3,210.4 567.0,200.0" fill="#232323" stroke-width="1"/>
<path d="M471 266L472 290L473 307M462 264L460 285M481 272L479 295L482 310M490 275L490 298M502 276L505 298M497 276L494 290M510 272L514 290M518 268L524 273L528 270M455 262L452 275M446 260L443 270M476 300L470 304M484 290L488 293" stroke-width="3.200"/>
<path d="M440 257L430 258L420 260L410 262L398 260" stroke-width="9"/>
<path d="M417 265L418 276L414 282M432 263L436 275M404 264L402 272" stroke-width="3.500"/>
<path d="M444 250L433 246L424 239L409 235" stroke-width="8"/>
<path d="M577 179.400L568 178L559.600 181M584 179.400L589 182M594 168L597.600 172.500M572 195L577 197M568 203L563 200M562 214L567 217" stroke-width="2.200"/>
<path d="M380 268L390 263L398 260" stroke-width="7"/>
<path d="M417 238L414 230M428 241L432 233M398 254L394 248M410 257L406 250M385 260L381 255" stroke-width="3"/>
<path d="M532.200 113.200L527.800 119.800L521.200 125.300L514.600 128.600L508 124.200L497 125.300L491.400 130.800L494.700 139.700L488 143L482.600 147.400L479.300 154L470.500 160.600L464 166L459.500 172.700" stroke-width="1.700" stroke="#2b2b2b"/>
<path d="M459.500 172.700L455 179.300L450.700 187L453 192.500L458.400 198L462.800 205.800L465 212.400" stroke-width="3.600" stroke="#292929"/>
<path d="M464 166L459.500 155L453 147.400L446.300 145.200L440.800 146.300M470 160L474 151M484 146L490 149M452 190L446 193M456 196L450 200" stroke-width="1.600" stroke="#2b2b2b"/>
<path d="M559.400 141L554.200 142L547.600 148.500L538.800 153L530 157.300L521.200 162.800L512.400 166" stroke-width="1.700" stroke="#292929"/>
<path d="M512.400 166L503.600 171.600L494.700 177L488 184L483 191L474 198.500" stroke-width="3.200"/>
<path d="M530 157L521 163L512 166.500L503.500 171.600L494.700 177L488 184L483 191L474 198.500L478 204L481 198L486 203L488 195L494 200L495 191L502 196L502 186L510 191L509 181L517 185L515 175L523 178L520 169L527 171L525 163L531 163Z" fill="#232323" stroke-width="1.200"/>
<path d="M551 146L554 151M536 154L533 149M508 169L503 165M499 174L494 170M490 181L485 178" stroke-width="2"/>
<path d="M346 313L358 305L372 300L385 292L398 284L408 278L416 272" stroke-width="8"/>
<path d="M352 309L366 306L376 303" stroke-width="11"/>
<path d="M358 298L352 287M372 293L368 282M386 287L384 277M398 281L399 272M376 306L374 320L378 331M362 308L356 318M388 294L395 300M368 310L366 318M348 306L343 300" stroke-width="3.500"/>
<path d="M346 313L338 319" stroke-width="6"/>
</g>
<rect x="317" y="81" width="459" height="447" filter="url(#nz4)" opacity=".16"/>
<rect x="317" y="81" width="459" height="447" filter="url(#nz5)" opacity=".07"/>
<rect x="317" y="81" width="459" height="447" filter="url(#nzd)" opacity=".18"/>
<rect x="317" y="81" width="459" height="447" filter="url(#nz)" opacity=".09"/>
<rect x="317" y="81" width="459" height="447" filter="url(#sp)" opacity=".15" mask="url(#urb)"/>
</g>
</svg>
<!-- bottom tabs -->
<div id="btabs">
<!-- small buttons -->
<svg class="a" style="left:288px;top:542px" width="7" height="6" viewBox="0 0 7 6" shape-rendering="crispEdges"><rect x=".5" y=".5" width="6" height="5" fill="#fff" stroke="#404040"/><rect x="0" y="0" width="7" height="2" fill="#404040"/></svg>
<div class="a" style="left:303px;top:544px;width:6px;height:2px;background:#ff0000"></div><div class="a" style="left:305px;top:542px;width:2px;height:6px;background:#ff0000"></div>
<div class="a" style="left:318px;top:544px;width:6px;height:2px;background:#a0a0a0"></div>
<svg class="a" style="left:333px;top:543px" width="6" height="4" viewBox="0 0 6 4" shape-rendering="crispEdges"><path fill="#404040" d="M0 0h6v1h-6zM4 1h1v1h-1zM3 2h1v1h-1zM5 2h1v1h-1zM0 3h4v1h-4zM5 3h1v1h-1z"/><path fill="#c0c0c0" d="M0 1h3v1h-3zM0 2h3v1h-3z"/></svg>
<svg class="a" style="left:340px;top:536px" width="290" height="20" viewBox="340 536 290 20">
<g fill="none" stroke="#000" stroke-width="1.100">
<path d="M407.800 540.500L412.500 551L414 552.500H459.500L461 551L466 540.500"/>
<path d="M467.200 540.500L472 551L473.500 552.500H509.500L511 551L515.700 540.500"/>
<path d="M517.700 540.500L522.500 551L524 552.500H560L561.500 551L566.200 540.500"/>
<path d="M568.400 540.500L573.200 551L574.700 552.500H611.500L613 551L618 540.500"/>
</g>
<path d="M345.500 538L351 551.500L353 553.500H400.500L402.500 551.500L408 538Z" fill="#fff"/>
<path d="M346 538L351.200 551.500L353 553.300H400.500L402.300 551.500L407.500 538" fill="none" stroke="#000" stroke-width="1.200"/>
</svg>
<div class="t" style="letter-spacing:-0.362px;left:357.4px;top:540px">Principal</div>
<div class="t" style="letter-spacing:-0.385px;left:420px;top:541px">Auxiliar</div>
<div class="t" style="letter-spacing:-0.086px;left:477.6px;top:541px">Tela 2</div>
<div class="t" style="letter-spacing:-0.103px;left:528.3px;top:541px">Tela 3</div>
<div class="t" style="letter-spacing:-0.053px;left:579.8px;top:541px">Tela 4</div>
</div>
</div>
<!-- status -->
<div id="status">
<div class="sunk" style="left:4px;top:556px;width:185px;height:17px"></div>
<div class="sunk" style="left:191px;top:556px;width:185px;height:17px"></div>
<div class="t" style="letter-spacing:-0.044px;left:192.6px;top:559px">X: 377220.3513  Y: 7443432.1306</div>
<div class="sunk" style="left:378px;top:556px;width:185px;height:17px"></div>
<div class="sunk" style="left:380px;top:557px;width:181px;height:15px;border-top-width:2px"></div>
<div class="sunk" style="left:564px;top:556px;width:44px;height:17px"></div>
<div class="sunk" style="left:610px;top:556px;width:185px;height:17px"></div>
<div class="t" style="letter-spacing:0.069px;left:612px;top:559px">PI: 20081025_153_A_126_3</div>
<svg class="a" style="left:800px;top:560px" width="14" height="14" viewBox="0 0 14 14">
<path d="M13 1L1 13M13 5L5 13M13 9L9 13" stroke="#fff" stroke-width="1"/>
<path d="M13.500 2L2 13.500M13.500 6L6 13.500M13.500 10L10 13.500" stroke="#808080" stroke-width="1.600"/>
</svg>
</div>
<svg class="a" style="left:352px;top:60px" width="12" height="21" viewBox="0 0 12 21" shape-rendering="crispEdges"><path fill="#000" d="M0 0h1v1h-1zM0 1h2v1h-2zM0 2h1v1h-1zM2 2h1v1h-1zM0 3h1v1h-1zM3 3h1v1h-1zM0 4h1v1h-1zM4 4h1v1h-1zM0 5h1v1h-1zM5 5h1v1h-1zM0 6h1v1h-1zM6 6h1v1h-1zM0 7h1v1h-1zM7 7h1v1h-1zM0 8h1v1h-1zM8 8h1v1h-1zM0 9h1v1h-1zM9 9h1v1h-1zM0 10h1v1h-1zM10 10h1v1h-1zM0 11h1v1h-1zM7 11h5v1h-5zM0 12h1v1h-1zM4 12h1v1h-1zM7 12h1v1h-1zM0 13h1v1h-1zM3 13h2v1h-2zM7 13h1v1h-1zM0 14h1v1h-1zM2 14h1v1h-1zM5 14h1v1h-1zM8 14h1v1h-1zM0 15h2v1h-2zM5 15h1v1h-1zM8 15h1v1h-1zM0 16h1v1h-1zM6 16h1v1h-1zM9 16h1v1h-1zM6 17h1v1h-1zM9 17h1v1h-1zM7 18h1v1h-1zM10 18h1v1h-1zM7 19h1v1h-1zM10 19h1v1h-1zM8 20h2v1h-2z"/><path fill="#fff" d="M1 2h1v1h-1zM1 3h2v1h-2zM1 4h3v1h-3zM1 5h4v1h-4zM1 6h5v1h-5zM1 7h6v1h-6zM1 8h7v1h-7zM1 9h8v1h-8zM1 10h9v1h-9zM1 11h6v1h-6zM1 12h3v1h-3zM5 12h2v1h-2zM1 13h2v1h-2zM5 13h2v1h-2zM1 14h1v1h-1zM6 14h2v1h-2zM6 15h2v1h-2zM7 16h2v1h-2zM7 17h2v1h-2zM8 18h2v1h-2zM8 19h2v1h-2z"/></svg>
</body></html>
